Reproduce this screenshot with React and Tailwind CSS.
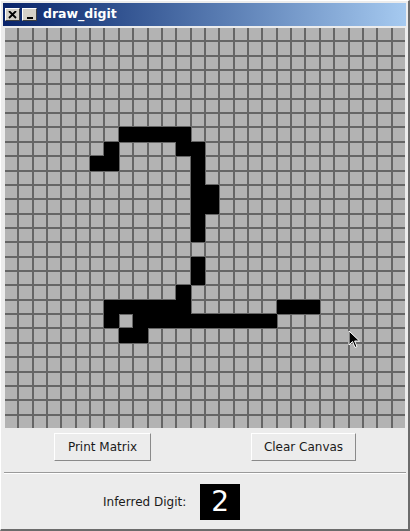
import React from 'react';

// cells painted black on the 28x28 canvas, row -> columns
const INK = {
  7: [8, 9, 10, 11, 12],
  8: [7, 12, 13],
  9: [6, 7, 13],
  10: [13],
  11: [13, 14],
  12: [13, 14],
  13: [13],
  14: [13],
  16: [13],
  17: [13],
  18: [12],
  19: [7, 8, 9, 10, 11, 12, 19, 20, 21],
  20: [7, 9, 10, 11, 12, 13, 14, 15, 16, 17, 18],
  21: [8, 9],
};

const isInk = (r, c) => (INK[r] || []).includes(c);

function TitleButton({ children }) {
  return (
    <div className="w-[15px] h-[13px] bg-[#d4d0c8] border-t border-l border-white border-r border-b border-r-[#404040] border-b-[#404040] flex items-center justify-center">
      {children}
    </div>
  );
}

function TkButton({ label, className }) {
  return (
    <button className={`h-[28px] bg-[#ececec] border-t border-l border-white border-r border-b border-r-[#8a8a8a] border-b-[#8a8a8a] text-[12px] text-[#1a1a1a] ${className}`}>
      {label}
    </button>
  );
}

export default function App() {
  const cells = [];
  for (let r = 0; r < 28; r++) {
    for (let c = 0; c < 28; c++) {
      cells.push(
        <div
          key={`${r}-${c}`}
          className={isInk(r, c) ? 'bg-black shadow-[0_0_0_1px_#000]' : 'bg-[#b3b3b3]'}
        />
      );
    }
  }

  return (
    <div className="relative w-[410px] h-[531px] overflow-hidden bg-[#ececec] border-t border-l border-white border-r-2 border-b-2 border-r-[#6b6b6b] border-b-[#6b6b6b] flex flex-col font-['DejaVu_Sans',sans-serif]">
      {/* title bar */}
      <div className="mt-[2px] mx-[2px] h-[23px] bg-linear-to-r from-[#0a246a] to-[#a6caf0] flex items-center pl-[2px] gap-[2px]">
        <TitleButton>
          <svg width="9" height="8" viewBox="0 0 9 8">
            <path d="M1 0 L8 7 M8 0 L1 7" stroke="#000" strokeWidth="1.8" />
          </svg>
        </TitleButton>
        <TitleButton>
          <div className="w-[6px] h-[2px] bg-black mt-[6px]" />
        </TitleButton>
        <span className="ml-[4px] text-white font-bold text-[12.5px] leading-none">draw_digit</span>
      </div>

      {/* drawing canvas */}
      <div className="mt-[2px] ml-[4px] w-[400px] h-[400px] bg-[#666666] grid grid-cols-28 grid-rows-28 gap-[2px]">
        {cells}
      </div>

      {/* buttons */}
      <div className="flex mt-[5px]">
        <TkButton label="Print Matrix" className="ml-[53px] w-[97px]" />
        <TkButton label="Clear Canvas" className="ml-[100px] w-[105px]" />
      </div>

      {/* separator */}
      <div className="mt-[11px] ml-[3px] mr-[2px] border-t border-[#9a9a9a] border-b border-b-white" />

      {/* result row */}
      <div className="flex-1 flex items-center pl-[102px]">
        <span className="text-[12px] text-[#1a1a1a]">Inferred Digit:</span>
        <div className="ml-[14px] w-[40px] h-[36px] bg-black flex items-center justify-center text-white text-[28px] leading-none">
          2
        </div>
      </div>

      {/* mouse pointer */}
      <svg className="absolute left-[347px] top-[329px]" width="14" height="20" viewBox="0 0 14 20">
        <path d="M1 1 L1 15 L4.5 11.5 L7 17.5 L9 16.6 L6.6 11 L11.5 11 Z" fill="#000" stroke="#fff" strokeWidth="1" />
      </svg>
    </div>
  );
}
